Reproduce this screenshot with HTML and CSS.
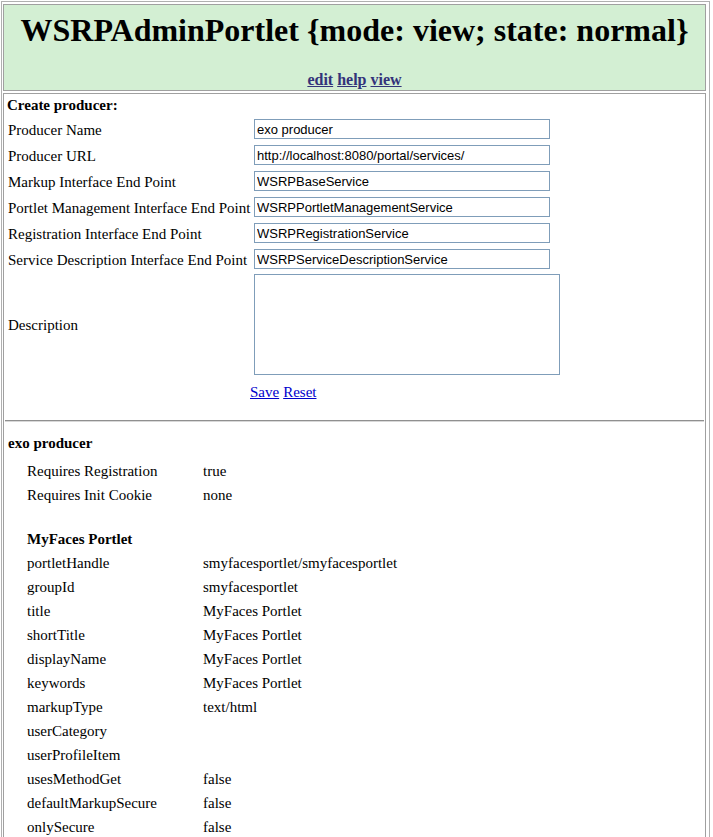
FILE: index.html
```html
<!DOCTYPE html>
<html>
<head>
<meta charset="utf-8">
<link rel="stylesheet" href="styles.css">
</head>
<body>
<div class="portlet">
  <div class="header">
    <h1 class="title">WSRPAdminPortlet {mode: view; state: normal}</h1>
    <div class="modes"><a href="#">edit</a> <a href="#">help</a> <a href="#">view</a></div>
  </div>
  <div class="content">
    <div class="section-title">Create producer:</div>
    <div class="form">
      <div class="label">Producer Name</div><div class="field"><input class="text" value="exo producer"></div>
      <div class="label">Producer URL</div><div class="field"><input class="text" value="http://localhost:8080/portal/services/"></div>
      <div class="label">Markup Interface End Point</div><div class="field"><input class="text" value="WSRPBaseService"></div>
      <div class="label">Portlet Management Interface End Point</div><div class="field"><input class="text" value="WSRPPortletManagementService"></div>
      <div class="label">Registration Interface End Point</div><div class="field"><input class="text" value="WSRPRegistrationService"></div>
      <div class="label">Service Description Interface End Point</div><div class="field"><input class="text" value="WSRPServiceDescriptionService"></div>
      <div class="label desc-label">Description</div><div class="field area"><textarea class="desc"></textarea></div>
      <div class="label"></div><div class="actions"><a href="#">Save</a> <a href="#">Reset</a></div>
    </div>
    <hr class="sep">
    <div class="producer">exo producer</div>
    <div class="props">
      <div class="k">Requires Registration</div><div class="v">true</div>
      <div class="k">Requires Init Cookie</div><div class="v">none</div>
      <div class="k spacer"></div><div class="v spacer"></div>
      <div class="k bold">MyFaces Portlet</div><div class="v"></div>
      <div class="k">portletHandle</div><div class="v">smyfacesportlet/smyfacesportlet</div>
      <div class="k">groupId</div><div class="v">smyfacesportlet</div>
      <div class="k">title</div><div class="v">MyFaces Portlet</div>
      <div class="k">shortTitle</div><div class="v">MyFaces Portlet</div>
      <div class="k">displayName</div><div class="v">MyFaces Portlet</div>
      <div class="k">keywords</div><div class="v">MyFaces Portlet</div>
      <div class="k">markupType</div><div class="v">text/html</div>
      <div class="k">userCategory</div><div class="v"></div>
      <div class="k">userProfileItem</div><div class="v"></div>
      <div class="k">usesMethodGet</div><div class="v">false</div>
      <div class="k">defaultMarkupSecure</div><div class="v">false</div>
      <div class="k">onlySecure</div><div class="v">false</div>
    </div>
  </div>
</div>
</body>
</html>
```
FILE: styles.css
```css
html, body {
  margin: 0;
  padding: 0;
  background: #ffffff;
}
body {
  font-family: "Liberation Serif", "Times New Roman", serif;
  font-size: 15px;
  color: #000;
  overflow: hidden;
}
.portlet {
  margin: 1px 0 0 1px;
  width: 703px;
  border: 1px solid #b0b0b0;
  padding: 2px 3px 2px 1px;
  display: flex;
  flex-direction: column;
  gap: 2px;
}
.header {
  background: #d3efd3;
  border: 1px solid #a0a0a0;
  height: 87px;
  box-sizing: border-box;
  text-align: center;
  display: flex;
  flex-direction: column;
  align-items: center;
}
.title {
  margin: 7px 0 0 0;
  font-size: 32px;
  line-height: 36px;
  font-weight: bold;
}
.modes {
  margin-top: 23px;
  font-size: 16px;
  font-weight: bold;
  line-height: 18px;
}
.modes a {
  color: #33337a;
}
.content {
  border: 1px solid #a0a0a0;
  padding: 3px 0 0 0;
  min-height: 760px;
}
.section-title {
  font-weight: bold;
  padding-left: 3px;
  line-height: 16px;
}
.form {
  display: grid;
  grid-template-columns: 242px 320px;
  grid-template-rows: repeat(6, 26px) 26px 26px 26px 26px 26px;
  padding-left: 4px;
  margin-top: 3px;
}
.label {
  display: flex;
  align-items: center;
  white-space: nowrap;
  padding-top: 3px;
}
.desc-label {
  grid-row: span 4;
}
.field {
  display: flex;
  align-items: center;
  padding-left: 4px;
}
.text {
  width: 296px;
  height: 20px;
  box-sizing: border-box;
  border: 1px solid #7f9db9;
  padding: 0 2px;
  font-family: "Liberation Sans", Arial, sans-serif;
  font-size: 13px;
  color: #000;
  margin: 0;
}
.area {
  grid-row: span 4;
}
.desc {
  width: 306px;
  height: 101px;
  box-sizing: border-box;
  border: 1px solid #7f9db9;
  margin: 0;
  resize: none;
}
.actions {
  display: flex;
  align-items: center;
  gap: 4px;
  padding-top: 6px;
}
.actions a {
  color: #0000cc;
}
.sep {
  margin: 18px 1px 0 1px;
  border: 0;
  border-top: 1px solid #909090;
  border-bottom: 1px solid #d8d8d8;
  height: 0;
}
.producer {
  font-weight: bold;
  padding-left: 4px;
  margin-top: 12px;
  line-height: 18px;
}
.props {
  display: grid;
  grid-template-columns: 176px 300px;
  grid-template-rows: 24px 24px 20px;
  grid-auto-rows: 24px;
  padding-left: 23px;
  margin-top: 7px;
}
.k, .v {
  display: flex;
  align-items: center;
  white-space: nowrap;
}
.bold {
  font-weight: bold;
}
```
